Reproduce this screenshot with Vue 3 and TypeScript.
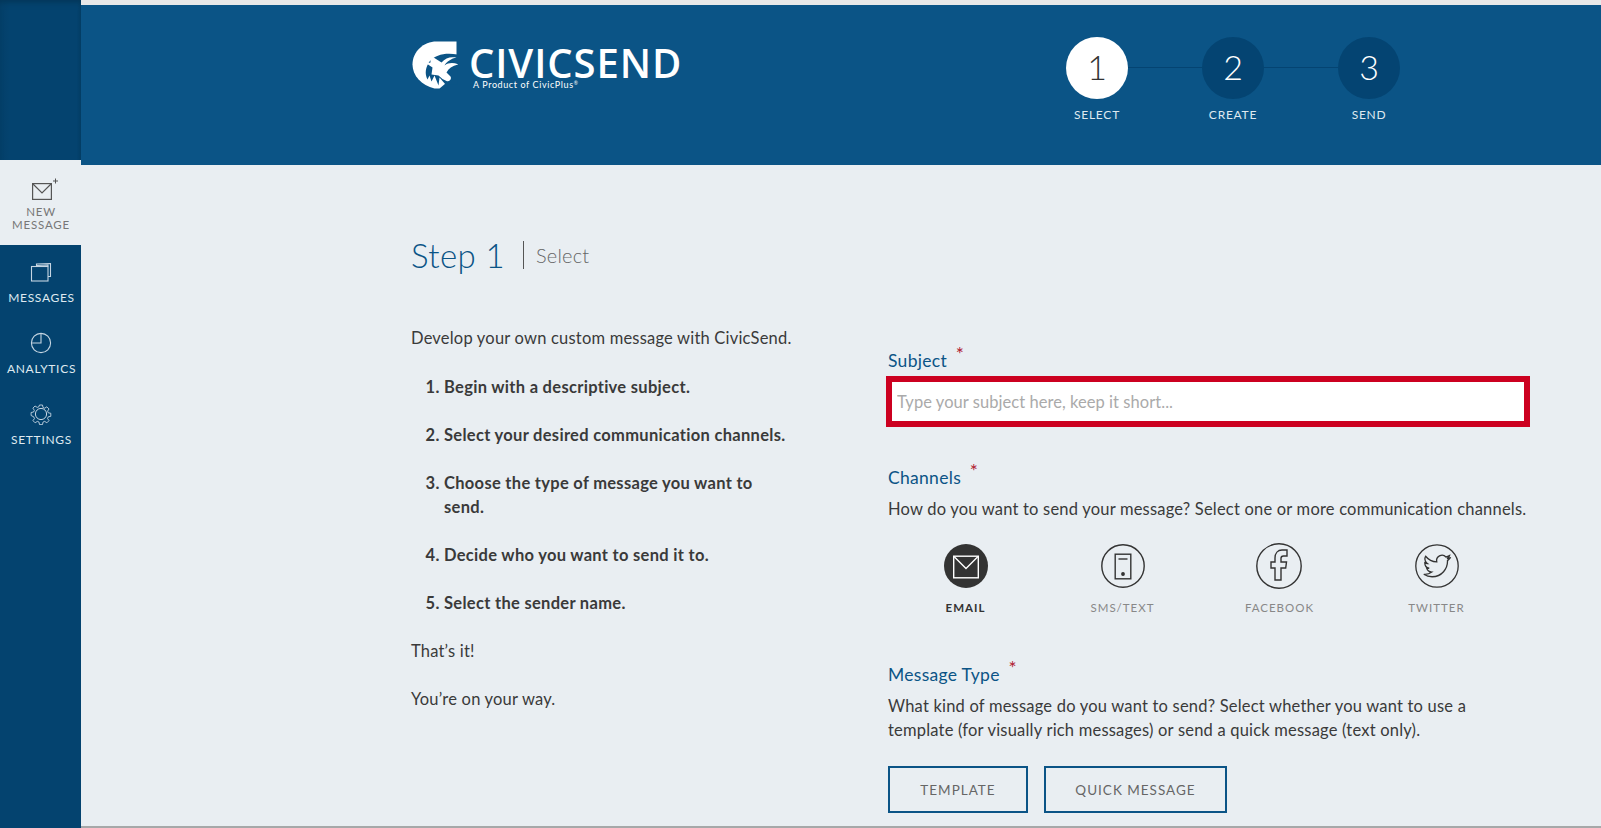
<script setup lang="ts">
interface Step { n: number; label: string; active?: boolean }
const steps: Step[] = [
  { n: 1, label: 'SELECT', active: true },
  { n: 2, label: 'CREATE' },
  { n: 3, label: 'SEND' },
]
const list: string[] = [
  'Begin with a descriptive subject.',
  'Select your desired communication channels.',
  'Choose the type of message you want to send.',
  'Decide who you want to send it to.',
  'Select the sender name.',
]
</script>

<template>
  <div class="page">
    <aside class="side">
      <div class="side-top"></div>
      <a class="nav nav-active">
        <svg class="ico-new" width="28" height="24" viewBox="0 0 28 24" fill="none" stroke="#555" stroke-width="1.2">
          <rect x="1.6" y="5.6" width="18.8" height="15.8" />
          <path d="M2 6l9 9 9-9" />
          <path d="M24.5 0.5v5M22 3h5" stroke-width="1" />
        </svg>
        <span>NEW<br />MESSAGE</span>
      </a>
      <a class="nav">
        <svg width="22" height="20" viewBox="0 0 22 20" fill="none" stroke="#c5d5e2" stroke-width="1.1">
          <rect x="1.500" y="4.500" width="16.500" height="14.500" />
          <path d="M6.500 4V2L20.500 1.500V14.500H18M7 3.500L18 3 18 4.500" />
        </svg>
        <span>MESSAGES</span>
      </a>
      <a class="nav">
        <svg width="22" height="22" viewBox="0 0 22 22" fill="none" stroke="#c5d5e2" stroke-width="1.1">
          <circle cx="11" cy="11" r="9.6" />
          <path d="M11 1.4V11H1.4" />
        </svg>
        <span>ANALYTICS</span>
      </a>
      <a class="nav">
        <svg width="22" height="22" viewBox="0 0 22 22" fill="none" stroke="#c5d5e2" stroke-width="1">
          <circle cx="11" cy="11" r="5.6" />
          <path d="M9.3 1h3.4l.5 2.8 1.9.8 2.4-1.6 2.4 2.4-1.6 2.4.8 1.9 2.8.5v3.4l-2.8.5-.8 1.9 1.6 2.4-2.4 2.4-2.4-1.6-1.9.8-.5 2.8H9.3l-.5-2.8-1.9-.8-2.4 1.6-2.4-2.4 1.6-2.4-.8-1.9L0 12.7V9.3l2.8-.5.8-1.9L2 4.5 4.4 2.1l2.4 1.6 1.9-.8z" transform="translate(1.1 1.1) scale(.9)" />
        </svg>
        <span>SETTINGS</span>
      </a>
    </aside>

    <main class="main">
      <div class="strip"></div>
      <header class="head">
        <div class="logo">
          <svg class="logo-mark" width="46" height="48" viewBox="6.500 5.500 46 48">
            <path fill="#fff" d="M51 6H31C18 6 7 16 7 29C7 40 16 50 29 53L34 53 40 48 51 19Z" />
            <path fill="#0b5486" d="M52 19C40 17 30 19 24 26C20 32 19 38 22 44L24 40 26 46 29 40 33 50 34 42 40 49 52 49Z" />
            <path fill="#fff" d="M25 20L36 27C40 22 45 21 51 22C46 23 41 26 39 30C43 27 48 27 53 29C47 30 43 33 41 37L45 41C46.500 43 44 46.500 41 45.500L37 43.500 33 40 26 39 27 32 21 28 25 27Z" />
          </svg>
          <div class="logo-text">
            <div class="logo-name">CIVICSEND</div>
            <div class="logo-sub">A Product of CivicPlus<span class="reg">®</span></div>
          </div>
        </div>
        <div class="steps">
          <template v-for="(s, i) in steps" :key="s.n">
            <div class="line" v-if="i > 0"></div>
            <div class="step">
              <div class="circle" :class="{ on: s.active }">{{ s.n }}</div>
              <div class="step-label">{{ s.label }}</div>
            </div>
          </template>
        </div>
      </header>

      <section class="content">
        <div class="title">
          <h1>Step 1</h1>
          <span class="sub">Select</span>
        </div>
        <div class="cols">
          <div class="left">
            <p class="intro">Develop your own custom message with CivicSend.</p>
            <ol>
              <li v-for="item in list" :key="item">{{ item }}</li>
            </ol>
            <p>That’s it!</p>
            <p>You’re on your way.</p>
          </div>
          <div class="right">
            <label class="lab">Subject <i>*</i></label>
            <input class="subject" type="text" placeholder="Type your subject here, keep it short..." />

            <label class="lab lab-ch">Channels <i>*</i></label>
            <p class="desc">How do you want to send your message? Select one or more communication channels.</p>
            <div class="channels">
              <div class="ch ch-on">
                <svg width="44" height="44" viewBox="0 0 44 44" fill="none" stroke="#fff" stroke-width="1.4">
                  <circle cx="22" cy="22" r="22" fill="#333" stroke="none" />
                  <rect x="9.7" y="12.2" width="24.6" height="21.6" />
                  <path d="M10 12.5 22 24.5 34 12.5" />
                </svg>
                <span>EMAIL</span>
              </div>
              <div class="ch">
                <svg width="44" height="44" viewBox="0 0 44 44" fill="none" stroke="#333" stroke-width="1.4">
                  <circle cx="22" cy="22" r="21.2" />
                  <rect x="14.2" y="10.2" width="15.6" height="24.6" />
                  <path d="M17.5 15h9" />
                  <circle cx="22" cy="30" r="1.2" fill="#333" />
                </svg>
                <span>SMS/TEXT</span>
              </div>
              <div class="ch ch-fb">
                <svg width="46" height="46" viewBox="0 0 46 46" fill="none" stroke="#333" stroke-width="1.4">
                  <circle cx="23" cy="23" r="22.2" />
                  <path d="M19 37V25h-4v-6h4v-4c0-5 3-8 7-8h5v6h-3.500c-1.500 0-2.500.8-2.500 2.300V19h5.500l-.8 6H25v12z" />
                </svg>
                <span>FACEBOOK</span>
              </div>
              <div class="ch">
                <svg width="44" height="44" viewBox="0 0 44 44" fill="none" stroke="#333" stroke-width="1.3">
                  <circle cx="22" cy="22" r="21.2" />
                  <path transform="translate(8.800 8.800) scale(1.100)" stroke-width="1.200" d="M23.953 4.570a10 10 0 01-2.825.775 4.958 4.958 0 002.163-2.723c-.951.555-2.005.959-3.127 1.184a4.920 4.920 0 00-8.384 4.482C7.690 8.095 4.067 6.130 1.640 3.162a4.822 4.822 0 00-.666 2.475c0 1.710.870 3.213 2.188 4.096a4.904 4.904 0 01-2.228-.616v.060a4.923 4.923 0 003.946 4.827 4.996 4.996 0 01-2.212.085 4.936 4.936 0 004.604 3.417 9.867 9.867 0 01-6.102 2.105c-.390 0-.779-.023-1.170-.067a13.995 13.995 0 007.557 2.209c9.053 0 13.998-7.496 13.998-13.985 0-.210 0-.420-.015-.630A9.935 9.935 0 0024 4.590z" />
                </svg>
                <span>TWITTER</span>
              </div>
            </div>

            <label class="lab lab-mt">Message Type <i>*</i></label>
            <p class="desc desc-narrow">What kind of message do you want to send? Select whether you want to use a template (for visually rich messages) or send a quick message (text only).</p>
            <div class="btns">
              <button class="btn b1">TEMPLATE</button>
              <button class="btn b2">QUICK MESSAGE</button>
            </div>
          </div>
        </div>
      </section>
      <div class="bottom"></div>
    </main>
  </div>
</template>

<style>
html, body { margin: 0; overflow: hidden; }
</style>

<style scoped>
.page {
  display: flex;
  width: 1601px;
  height: 828px;
  overflow: hidden;
  background: #e9eef2;
  font-family: Lato, "Noto Sans", sans-serif;
  color: #3a3a3a;
}
.side {
  width: 81px;
  flex: none;
  background: #04436f;
  display: flex;
  flex-direction: column;
}
.side-top {
  height: 160px;
  background: linear-gradient(90deg, #043f69 0, #04436f 12%, #04436f 95%, #043e66 100%);
  box-shadow: inset 0 6px 6px -4px #033556;
}
.nav {
  height: 71px;
  display: flex;
  flex-direction: column;
  align-items: center;
  justify-content: flex-start;
  padding: 16px 0 0 2px;
  box-sizing: border-box;
  color: #dfe9f0;
  font-size: 12px;
  letter-spacing: 0.7px;
  text-align: center;
  line-height: 13px;
}
.nav svg { display: block; margin: 0 2px 8px 0; height: 22px; }
.nav-active {
  height: 85px;
  background: #e9eef2;
  color: #777;
  padding: 18px 0 0 1px;
  font-size: 11.5px;
  letter-spacing: 0.8px;
}
.nav-active svg { margin: 0 0 3px 8px; height: 24px; }
.main {
  flex: 1;
  display: flex;
  flex-direction: column;
  min-width: 0;
  position: relative;
}
.strip { height: 5px; background: #e8e8e8; flex: none; }
.head {
  height: 160px;
  flex: none;
  background: #0b5486;
  display: flex;
  padding-left: 330px;
  box-sizing: border-box;
}
.logo {
  display: flex;
  width: 624px;
  padding-top: 36px;
  box-sizing: border-box;
}
.logo-mark { display: block; margin-left: 1px; flex: none; }
.logo-text { margin-left: 11px; color: #fff; }
.logo-name {
  font-size: 40px;
  font-weight: 600;
  line-height: 28px;
  margin-top: 8px;
  letter-spacing: 0.9px;
  font-family: "Open Sans", sans-serif;
}
.logo-sub { font-size: 9px; line-height: 10px; margin: 3px 0 0 4px; letter-spacing: 0.6px; }
.reg { font-size: 5px; line-height: 0; vertical-align: 3px; }
.steps {
  display: flex;
  align-items: flex-start;
  padding-top: 32px;
  margin-left: 31px;
}
.step { width: 62px; display: flex; flex-direction: column; align-items: center; }
.circle {
  width: 62px;
  height: 62px;
  border-radius: 50%;
  background: #044472;
  color: #fff;
  font-size: 34px;
  font-weight: 300;
  line-height: 60px;
  text-align: center;
  flex: none;
}
.circle.on { background: #fff; color: #333; }
.step-label {
  margin-top: 8px;
  font-size: 12px;
  letter-spacing: 0.75px;
  line-height: 16px;
  color: #dfe9f0;
  white-space: nowrap;
}
.line { width: 74px; height: 1px; background: #044472; margin-top: 30px; }
.content {
  flex: 1;
  min-height: 0;
  padding: 72px 0 0 330px;
}
.title { display: flex; align-items: center; height: 36px; }
.title h1 {
  margin: 0;
  font-size: 33px;
  font-weight: 300;
  color: #0b5486;
  line-height: 36px;
  letter-spacing: 0.4px;
}
.sub {
  margin-left: 18px;
  padding-left: 12px;
  border-left: 1px solid #555;
  font-size: 20px;
  font-weight: 300;
  color: #666;
  line-height: 28px;
  letter-spacing: 0.2px;
}
.cols { display: flex; margin-top: 53px; }
.left { width: 390px; font-size: 16.5px; line-height: 24px; letter-spacing: 0.2px; }
.left p { margin: 0 0 24px; }
.left .intro { margin-bottom: 25px; }
.left ol { margin: 0 0 24px; padding: 0 11px 0 33px; font-weight: 700; letter-spacing: 0.3px; }
.left li { margin-bottom: 24px; }
.left li:last-child { margin-bottom: 0; }
.right { width: 650px; margin-left: 87px; padding-top: 24px; }
.lab {
  display: block;
  font-size: 17.5px;
  line-height: 22px;
  color: #0b5486;
  letter-spacing: 0.3px;
}
.lab i { font-style: normal; color: #b02030; font-size: 19px; line-height: 0; position: relative; top: -6px; left: 4px; }
.subject {
  display: block;
  box-sizing: border-box;
  width: 644px;
  height: 51px;
  margin: 4px 0 0 -2px;
  border: 6px solid #cc0020;
  background: #fff;
  padding: 0 5px;
  font: inherit;
  font-size: 16.5px;
  letter-spacing: 0.05px;
  outline: none;
}
.subject::placeholder { color: #aaa; opacity: 1; }
.lab-ch { margin-top: 40px; }
.desc {
  margin: 8px 0 0;
  width: 645px;
  font-size: 16.5px;
  line-height: 24px;
  letter-spacing: 0.2px;
}
.desc-narrow { width: 610px; }
.channels {
  display: grid;
  grid-template-columns: repeat(4, 157px);
  margin: 23px 0 0 -1px;
}
.ch {
  display: flex;
  flex-direction: column;
  align-items: center;
  color: #888;
  font-size: 11.5px;
  letter-spacing: 1px;
}
.ch svg { display: block; }
.ch-fb svg { margin: -1px 0 -1px -2px; }
.ch span { margin-top: 13px; line-height: 14px; }
.ch-on { color: #333; font-weight: 700; }
.lab-mt { margin-top: 49px; }
.btns { display: flex; gap: 16px; margin-top: 24px; }
.btn {
  height: 47px;
  box-sizing: border-box;
  border: 2px solid #0b5486;
  background: transparent;
  color: #666;
  font: inherit;
  font-size: 13.5px;
  letter-spacing: 1px;
  padding: 0;
}
.b1 { width: 140px; }
.b2 { width: 183px; }
.bottom {
  position: absolute;
  left: 0;
  right: 0;
  bottom: 0;
  height: 2px;
  background: #a6a8a9;
}
</style>
